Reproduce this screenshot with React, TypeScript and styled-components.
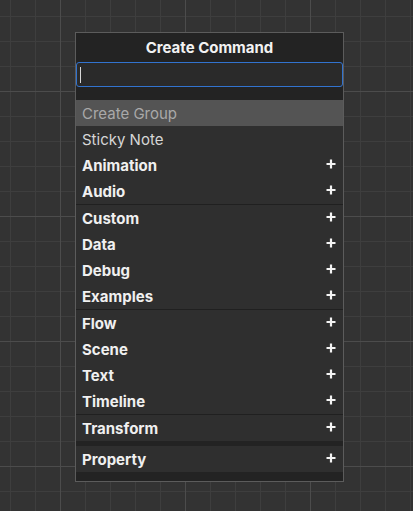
import React from "react";
import styled, { createGlobalStyle } from "styled-components";

const Global = createGlobalStyle`
  html, body { margin: 0; padding: 0; height: 100%; }
  body {
    background-color: #333333;
    background-image:
      linear-gradient(to right, #4c4c4c 1px, transparent 1px),
      linear-gradient(to bottom, #4c4c4c 1px, transparent 1px),
      linear-gradient(to right, #3e3e3e 1px, transparent 1px),
      linear-gradient(to bottom, #3e3e3e 1px, transparent 1px);
    background-size: 125px 125px, 125px 125px, 25px 25px, 25px 25px;
    background-position: 60px 0, 0 91px, 10px 0, 0 16px;
    font-family: Inter, "Noto Sans", sans-serif;
    overflow: hidden;
  }
  #root { height: 100%; }
`;

const Canvas = styled.div`
  position: relative;
  width: 413px;
  height: 511px;
`;

const Panel = styled.div`
  position: absolute;
  left: 75px;
  top: 32px;
  width: 267px;
  border: 1px solid #5c5c5c;
  background: #232323;
  display: flex;
  flex-direction: column;
`;

const Header = styled.div`
  height: 29px;
  display: flex;
  align-items: center;
  justify-content: center;
  color: #f2f2f2;
  font-weight: 700;
  font-size: 15px;
`;

const SearchBox = styled.div`
  height: 23px;
  border: 1px solid #3273cf;
  border-radius: 3px;
  background: #2a2a2a;
  display: flex;
  align-items: center;
  padding-left: 3px;
`;

const Caret = styled.div`
  width: 1px;
  height: 16px;
  background: #d8d8d8;
`;

const Spacer = styled.div<{ $h: number }>`
  height: ${(p) => p.$h}px;
  background: #232323;
`;

const List = styled.div`
  display: flex;
  flex-direction: column;
  background: #2f2f2f;
`;

const Row = styled.div<{ $bold?: boolean; $active?: boolean; $sep?: boolean }>`
  height: 26px;
  display: flex;
  align-items: center;
  justify-content: space-between;
  padding: 0 7px 0 6px;
  font-size: 15px;
  font-weight: ${(p) => (p.$bold ? 700 : 400)};
  color: ${(p) => (p.$active ? "#a9a9a9" : p.$bold ? "#f0f0f0" : "#d6d6d6")};
  background: ${(p) => (p.$active ? "#545454" : "#2f2f2f")};
  border-top: ${(p) => (p.$sep ? "1px solid #202020" : "none")};
`;

const PlusIcon = styled.svg`
  width: 10px;
  height: 10px;
  margin-top: -3px;
  flex: none;
`;

const Plus = () => (
  <PlusIcon viewBox="0 0 10 10">
    <path d="M5 0.5V9.5M0.5 5H9.5" stroke="#f4f4f4" strokeWidth="2.2" />
  </PlusIcon>
);

const groups: string[][] = [
  ["Animation", "Audio"],
  ["Custom", "Data", "Debug", "Examples"],
  ["Flow", "Scene", "Text", "Timeline"],
  ["Transform"],
];

export default function App() {
  return (
    <>
      <Global />
      <Canvas>
        <Panel>
          <Header>Create Command</Header>
          <SearchBox>
            <Caret />
          </SearchBox>
          <Spacer $h={13} />
          <List>
            <Row $active>Create Group</Row>
            <Row>Sticky Note</Row>
            {groups.map((g, gi) =>
              g.map((name, i) => (
                <Row key={name} $bold $sep={gi > 0 && i === 0}>
                  {name}
                  <Plus />
                </Row>
              ))
            )}
          </List>
          <Spacer $h={5} />
          <List>
            <Row $bold>
              Property
              <Plus />
            </Row>
          </List>
          <Spacer $h={9} />
        </Panel>
      </Canvas>
    </>
  );
}
